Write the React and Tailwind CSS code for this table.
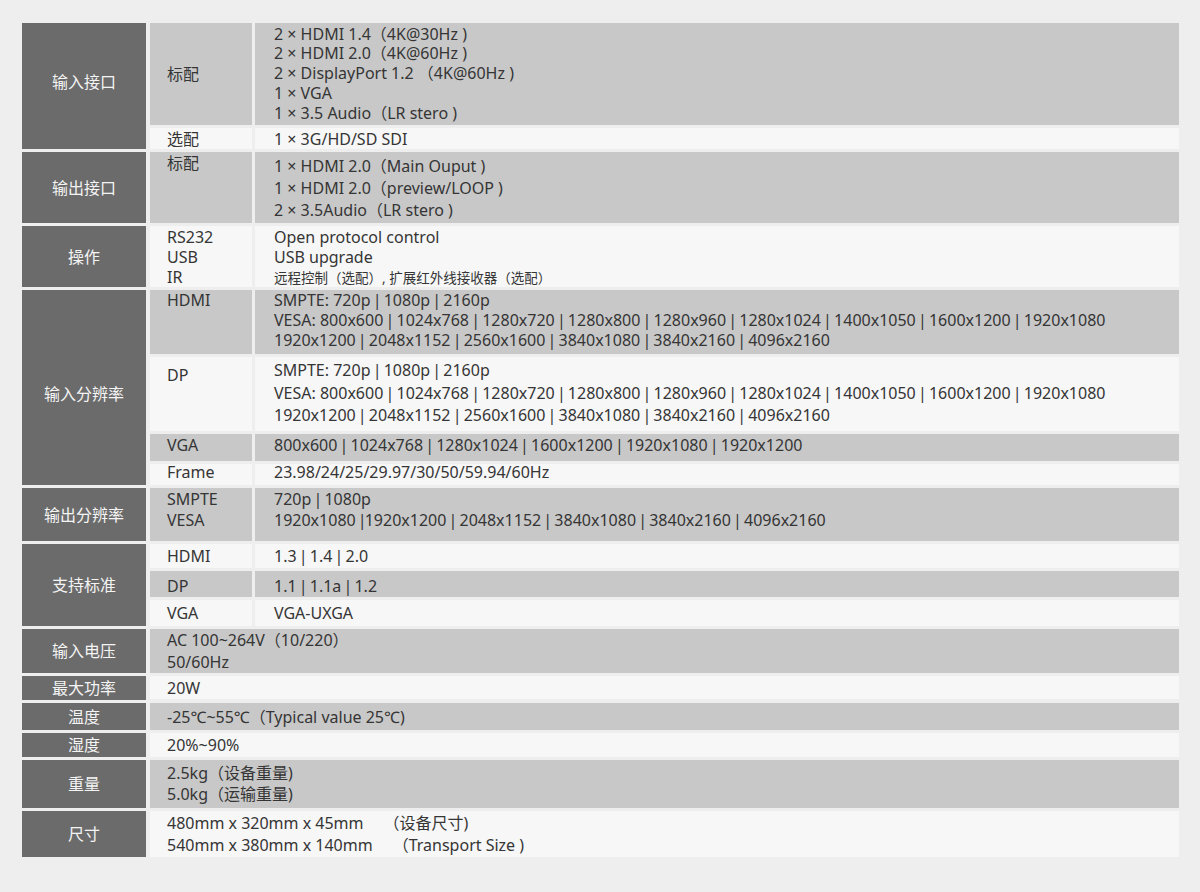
import React from 'react';

const GRAY = 'bg-[#c8c8c8]';
const LIGHT = 'bg-[#f7f7f7]';

// each group: dark label on the left, rows on the right
const groups = [
    {
        label: '输入接口',
        labelClass: 'pb-[8px]',
        rows: [
            {
                sub: ['标配'],
                h: 'h-[102px]',
                bg: GRAY,
                align: 'items-center',
                lh: 'leading-[19.7px]',
                lines: [
                    '2 × HDMI 1.4（4K@30Hz )',
                    '2 × HDMI 2.0（4K@60Hz )',
                    '2 × DisplayPort 1.2 （4K@60Hz )',
                    '1 × VGA',
                    '1 × 3.5 Audio（LR stero )',
                ],
            },
            { sub: ['选配'], h: 'h-[21px]', bg: LIGHT, align: 'items-center', lines: ['1 × 3G/HD/SD SDI'] },
        ],
    },
    {
        label: '输出接口',
        rows: [
            {
                sub: ['标配'],
                h: 'h-[71px]',
                bg: GRAY,
                align: 'items-start',
                subPad: 'pt-[1px]',
                valPad: 'pt-[3px]',
                lh: 'leading-[22px]',
                lines: ['1 × HDMI 2.0（Main Ouput )', '1 × HDMI 2.0（preview/LOOP )', '2 × 3.5Audio（LR stero )'],
            },
        ],
    },
    {
        label: '操作',
        rows: [
            {
                sub: ['RS232', 'USB', 'IR'],
                h: 'h-[61px]',
                bg: LIGHT,
                align: 'items-start',
                subPad: 'pt-[1px]',
                valPad: 'pt-[1px]',
                lh: 'leading-[20px]',
                lines: ['Open protocol control', 'USB upgrade', <span className="text-[13.5px]">远程控制（选配）, 扩展红外线接收器（选配）</span>],
            },
        ],
    },
    {
        label: '输入分辨率',
        labelClass: 'pt-[12px]',
        rows: [
            {
                sub: ['HDMI'],
                h: 'h-[64px]',
                bg: GRAY,
                align: 'items-start',
                subPad: 'pt-[0px]',
                valPad: 'pt-[0px]',
                lh: 'leading-[20px]',
                lines: [
                    'SMPTE: 720p | 1080p | 2160p',
                    'VESA: 800x600 | 1024x768 | 1280x720 | 1280x800 | 1280x960 | 1280x1024 | 1400x1050 | 1600x1200 | 1920x1080',
                    '1920x1200 | 2048x1152 | 2560x1600 | 3840x1080 | 3840x2160 | 4096x2160',
                ],
            },
            {
                sub: ['DP'],
                h: 'h-[74px]',
                bg: LIGHT,
                align: 'items-start',
                subPad: 'pt-[8px]',
                valPad: 'pt-[2px]',
                lh: 'leading-[22.5px]',
                lines: [
                    'SMPTE: 720p | 1080p | 2160p',
                    'VESA: 800x600 | 1024x768 | 1280x720 | 1280x800 | 1280x960 | 1280x1024 | 1400x1050 | 1600x1200 | 1920x1080',
                    '1920x1200 | 2048x1152 | 2560x1600 | 3840x1080 | 3840x2160 | 4096x2160',
                ],
            },
            {
                sub: ['VGA'],
                h: 'h-[27px]',
                bg: GRAY,
                align: 'items-center',
                subPad: 'pb-[5px]',
                valPad: 'pb-[5px]',
                lines: ['800x600 | 1024x768 | 1280x1024 | 1600x1200 | 1920x1080 | 1920x1200'],
            },
            {
                sub: ['Frame'],
                h: 'h-[21px]',
                bg: LIGHT,
                align: 'items-center',
                subPad: 'pb-[5px]',
                valPad: 'pb-[5px]',
                lines: ['23.98/24/25/29.97/30/50/59.94/60Hz'],
            },
        ],
    },
    {
        label: '输出分辨率',
        rows: [
            {
                sub: ['SMPTE', 'VESA'],
                h: 'h-[53px]',
                bg: GRAY,
                align: 'items-start',
                subPad: 'pt-[1px]',
                valPad: 'pt-[1px]',
                lh: 'leading-[21px]',
                lines: ['720p | 1080p', '1920x1080 |1920x1200 | 2048x1152 | 3840x1080 | 3840x2160 | 4096x2160'],
            },
        ],
    },
    {
        label: '支持标准',
        rows: [
            { sub: ['HDMI'], h: 'h-[24px]', bg: LIGHT, align: 'items-center', lines: ['1.3 | 1.4 | 2.0'] },
            {
                sub: ['DP'],
                h: 'h-[26px]',
                bg: GRAY,
                align: 'items-center',
                subPad: 'pt-[3px]',
                valPad: 'pt-[3px]',
                lines: ['1.1 | 1.1a | 1.2'],
            },
            { sub: ['VGA'], h: 'h-[26px]', bg: LIGHT, align: 'items-center', lines: ['VGA-UXGA'] },
        ],
    },
    { label: '输入电压', span: true, h: 'h-[44px]', bg: GRAY, lh: 'leading-[22px]', lines: ['AC 100~264V（10/220）', '50/60Hz'] },
    { label: '最大功率', span: true, h: 'h-[23px]', bg: LIGHT, lines: ['20W'] },
    { label: '温度', span: true, h: 'h-[27px]', bg: GRAY, lines: ['-25℃~55℃（Typical value 25℃)'] },
    { label: '湿度', span: true, h: 'h-[24px]', bg: LIGHT, lines: ['20%~90%'] },
    { label: '重量', span: true, h: 'h-[48px]', bg: GRAY, lh: 'leading-[21px]', lines: ['2.5kg（设备重量)', '5.0kg（运输重量)'] },
    {
        label: '尺寸',
        span: true,
        h: 'h-[46px]',
        bg: LIGHT,
        lh: 'leading-[22px]',
        lines: [
            <>480mm x 320mm x 45mm<span className="ml-[20px]">（设备尺寸)</span></>,
            <>540mm x 380mm x 140mm<span className="ml-[20px]">（Transport Size )</span></>,
        ],
    },
];

// the source font has a much narrower "|" than Noto Sans
const withPipes = (s) => {
    if (typeof s !== 'string' || !s.includes('|')) return s;
    const parts = s.split('|');
    return parts.map((p, i) => (
        <React.Fragment key={i}>
            {p}
            {i < parts.length - 1 && <span className="mx-[-2px]">|</span>}
        </React.Fragment>
    ));
};

const Lines = ({ lines, lh = 'leading-[20px]' }) => (
    <div className={`flex flex-col ${lh}`}>
        {lines.map((l, i) => (
            <div key={i} className="whitespace-pre">{withPipes(l)}</div>
        ))}
    </div>
);

const SubRow = ({ row }) => (
    <div className={`flex ${row.h} gap-[3px]`}>
        <div className={`w-[102px] shrink-0 flex ${row.align} ${row.bg} pl-[17px] ${row.subPad || ''}`}>
            <Lines lines={row.sub} lh={row.sub.length > 1 ? row.lh : 'leading-[20px]'} />
        </div>
        <div className={`flex-1 flex ${row.align} ${row.bg} pl-[19px] ${row.valPad || ''}`}>
            <Lines lines={row.lines} lh={row.lh} />
        </div>
    </div>
);

export default function App() {
    return (
        <div
            className="min-h-screen bg-[#eeeeee] pt-[23px] pb-[36px] text-[16px] text-[#353535]"
            style={{ fontFamily: '"Noto Sans", "Noto Sans CJK SC", sans-serif' }}
        >
            <div className="ml-[22px] w-[1157px] flex flex-col gap-[3px]">
                {groups.map((g) => (
                    <div key={g.label} className="flex gap-[4px]">
                        <div
                            className={`w-[124px] shrink-0 bg-[#6b6b6b] text-[#f4f4f4] flex items-center justify-center ${g.labelClass || ''}`}
                        >
                            {g.label}
                        </div>
                        {g.span ? (
                            <div className={`flex-1 flex items-center ${g.h} ${g.bg} pl-[17px]`}>
                                <Lines lines={g.lines} lh={g.lh} />
                            </div>
                        ) : (
                            <div className="flex-1 flex flex-col gap-[3px]">
                                {g.rows.map((r, i) => (
                                    <SubRow key={i} row={r} />
                                ))}
                            </div>
                        )}
                    </div>
                ))}
            </div>
        </div>
    );
}
